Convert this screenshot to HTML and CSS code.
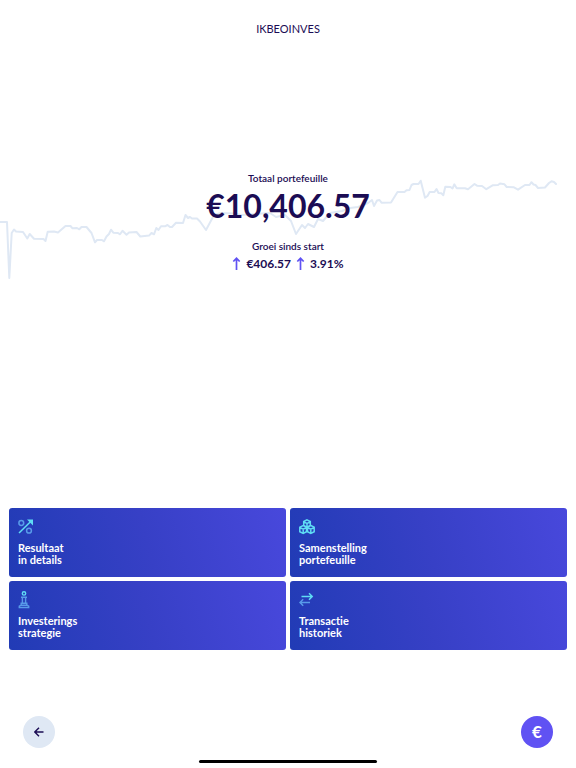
FILE: index.html
```html
<!DOCTYPE html>
<html lang="nl">
<head>
<meta charset="utf-8">
<meta name="viewport" content="width=device-width, initial-scale=1">
<title>Portefeuille</title>
<link rel="stylesheet" href="styles.css">
</head>
<body>
<div class="app">
  <header class="header"><h1 class="title">IKBEOINVES</h1></header>

  <main class="main">
    <section class="summary">
      <svg class="chart" viewBox="0 0 576 120" aria-hidden="true">
        <polyline points="0,57 7,57 9.3,113 11.7,68 14,64.5 16,66.5 23,67 27.3,73.5 29.7,69 34,73.7 43.5,74 45.5,76 47.7,66.7 54,66.5 58,67.5 65.5,61 70.5,61 72.5,63.3 77,63 79.3,64.3 81.5,62 86.5,62 91.5,68 95,77.3 97,75 102,75 104,76.3 106.5,71.5 109,69 111,64.7 113.3,67.7 118,68 120,69.3 122.5,65.7 126.5,69.7 129,67.5 136.5,67 140.3,71.5 149,70.6 151.5,68 154,69.3 156.3,63 158.5,65 161,61.3 165,61.3 167.5,60 170,62 172,62 176,57.7 183,58 185.5,50 188,53 190,52 192,53.5 197,53.5 200,56.5 206,65 214,50 221,48 233,48.5 241,50 270,48 276,52 285,50 291,56 296,69 302,60 305,63 308,59 314,62 318,54 323,56 330,48 342,46 350,43 358,42 368,38 372,35 374,41 377,35.5 379.5,35 381.5,37.7 391,37.5 397.5,27 404.5,27 406.5,25.3 409.5,25 411.5,20 413.5,19 418.5,19 420.7,15.7 425,32.7 427.5,31 429.7,27 434.5,27 436.5,24 438.5,28 441.5,28.3 443.3,30.3 445.3,21.7 450.5,22 452.5,23.5 454.3,19.3 456.7,23.3 465,23.3 468,24.2 474.5,19 477,20.7 482,21 486.3,24.2 493,20.2 498,20 500,18.5 504.5,19.3 506.7,22 513.5,22.2 518,24.7 525,20 529.5,20 531.5,17.2 533.5,19.5 535.5,20 538,23 545,22.5 549,18 551.5,16.3 554,17 556,19"/>
      </svg>
      <h2 class="label">Totaal portefeuille</h2>
      <p class="amount">€10,406.57</p>
      <h2 class="label">Groei sinds start</h2>
      <p class="growth">
        <svg class="up" viewBox="0 0 8 14" aria-hidden="true"><path d="M4 13V1.5M.8 4.500 4 1.300l3.200 3.200"/></svg>
        <span>€406.57</span>
        <svg class="up" viewBox="0 0 8 14" aria-hidden="true"><path d="M4 13V1.5M.8 4.500 4 1.300l3.200 3.200"/></svg>
        <span>3.91%</span>
      </p>
    </section>

    <nav class="tiles">
      <a class="tile" href="#resultaat">
        <svg class="icon" viewBox="0 0 16 16" aria-hidden="true">
          <g class="soft"><circle cx="3.300" cy="4" r="2.400"/><circle cx="11" cy="11.700" r="2.400"/></g>
          <path class="bright" d="M1 14 13.500 1.800"/><path class="solid" d="M9 .5h6v6z"/>
        </svg>
        <span>Resultaat<br>in details</span>
      </a>
      <a class="tile" href="#samenstelling">
        <svg class="icon" viewBox="0 0 16 16" aria-hidden="true">
          <path class="bright" d="M8 .8l3.300 1.700v4L8 8.200 4.700 6.500v-4zM4.700 2.800 8 4.400l3.300-1.600M8 4.400v3.800M4.200 6.500l3.300 1.700v4.500l-3.300 1.700-3.400-1.700V8.200zM.8 8.500l3.400 1.700 3.300-1.700M4.200 10.200v4.200M11.800 6.500l3.400 1.700v4.500l-3.400 1.700-3.300-1.700V8.200zM8.500 8.500l3.300 1.700 3.400-1.700M11.800 10.200v4.200"/>
        </svg>
        <span>Samenstelling<br>portefeuille</span>
      </a>
      <a class="tile" href="#strategie">
        <svg class="icon icon-tall" viewBox="0 0 12 17" aria-hidden="true">
          <circle class="bright" cx="6" cy="1.500" r="1.800"/>
          <path class="soft" d="M2.800 5.500h6.400M4.300 5.800v6M7.700 5.800v6M3 12h6v2l2 1v1.500H1V15l2-1zM3 14h6"/>
        </svg>
        <span>Investerings<br>strategie</span>
      </a>
      <a class="tile" href="#transacties">
        <svg class="icon" viewBox="0 0 16 16" aria-hidden="true">
          <path class="bright" d="M2.500 4.500H13M10 1.300 13.200 4.500 10 7.700"/>
          <path class="soft" d="M11 10.500H1.200M4.200 7.300 1 10.500l3.200 3.200"/>
        </svg>
        <span>Transactie<br>historiek</span>
      </a>
    </nav>
  </main>

  <footer class="actions">
    <button class="round back" type="button" aria-label="Terug">
      <svg class="arrow" viewBox="0 0 10 10" aria-hidden="true"><path d="M9.500 5H1M5 .8.8 5 5 9.200"/></svg>
    </button>
    <button class="round euro" type="button">€</button>
  </footer>
  <div class="home-bar"></div>
</div>
</body>
</html>
```
FILE: styles.css
```css
* { box-sizing: border-box; }
body {
  margin: 0;
  background: #fff;
  color: #1b0c54;
  font-family: Lato, "Liberation Sans", sans-serif;
  font-variant-ligatures: none;
}
h1, h2, p { margin: 0; }
svg { display: block; fill: none; }

.app { display: flex; flex-direction: column; min-height: 100vh; }
.header { padding-top: 19px; text-align: center; }
.title { font-size: 11px; line-height: 20px; font-weight: 400; }

.main { flex: 1; display: flex; flex-direction: column; }
.summary {
  position: relative;
  display: flex;
  flex-direction: column;
  align-items: center;
  margin-top: 126px;
  padding-top: 5px;
}
.chart { position: absolute; top: 0; left: 0; width: 100%; }
.chart polyline { stroke: #dfe8f4; stroke-width: 2; stroke-linejoin: round; stroke-linecap: round; }
.label, .amount, .growth { position: relative; font-weight: 700; }
.label { font-size: 10px; line-height: 16px; font-weight: 600; }
.amount { font-size: 32px; line-height: 40px; margin-bottom: 12px; }
.growth { display: flex; align-items: center; gap: 5px; font-size: 12px; line-height: 20px; }
.up { width: 9px; height: 14px; stroke: #6052f3; stroke-width: 1.700; }

.tiles {
  display: grid;
  grid-template-columns: 1fr 1fr;
  gap: 4px;
  margin: auto 9px 66px;
}
.tile {
  display: flex;
  flex-direction: column;
  gap: 7px;
  height: 69px;
  padding: 11px 9px 0;
  border-radius: 3px;
  background: linear-gradient(75deg, #213bb5, #3740c6 50%, #4848dc);
  color: #fff;
  font-size: 11px;
  line-height: 12px;
  font-weight: 700;
  text-decoration: none;
}
.icon { width: 16px; height: 16px; }
.icon-tall { width: 12px; overflow: visible; }
.bright { stroke: #5fdcf4; stroke-width: 1.500; }
.soft { stroke: #589be9; stroke-width: 1.500; }
.solid { fill: #5fdcf4; }

.actions { display: flex; justify-content: space-between; padding: 0 23px; }
.round {
  display: flex;
  align-items: center;
  justify-content: center;
  width: 32px;
  height: 32px;
  padding: 0;
  border: 0;
  border-radius: 50%;
  font: 700 17px/20px Lato, "Liberation Sans", sans-serif;
}
.back { background: #dfe8f4; }
.euro { background: #6052f3; color: #fff; }
.arrow { width: 10px; height: 10px; stroke: #1b0c54; stroke-width: 1.400; }
.home-bar {
  width: 31%;
  height: 3px;
  margin: 12px auto 5px;
  border-radius: 2px;
  background: #000;
}
```
